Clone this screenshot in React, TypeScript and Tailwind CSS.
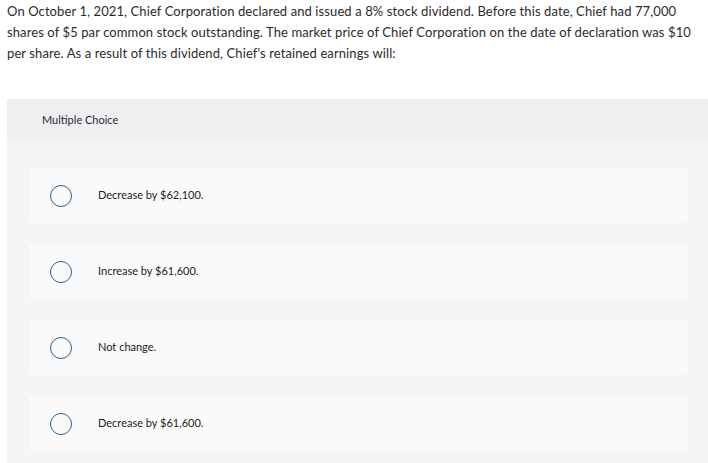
const options = ['Decrease by $62,100.', 'Increase by $61,600.', 'Not change.', 'Decrease by $61,600.'];

export default function App() {
  return (
    <div className="min-h-[463px] bg-white pl-[7px] text-[#2b2b2b] font-['Lato','Liberation_Sans',sans-serif]">
      <p className="w-[690px] pt-[1px] text-[13px] leading-[21px] tracking-[0.1px]">
        On October 1, 2021, Chief Corporation declared and issued a 8% stock dividend. Before this date, Chief had 77,000 shares of $5 par common stock outstanding. The market price of Chief Corporation on the date of declaration was $10 per share. As a result of this dividend, Chief&apos;s retained earnings will:
      </p>
      <div className="mt-[35px] bg-[#f5f5f5] pb-[20px]">
        <div className="flex h-[42px] items-center bg-[#efefef] pl-[35px] text-[11px] text-[#2a2a3a]">Multiple Choice</div>
        <div className="flex flex-col gap-[21px] pt-[27px] pl-[22px] pr-[20px]">
          {options.map((o) => (
            <div key={o} className="flex h-[55px] items-center rounded-[3px] bg-[#fafafa] pl-[21px]">
              <span className="h-[22px] w-[22px] rounded-full border-[1.5px] border-[#2f5f8f]" />
              <span className="ml-[26px] text-[11px] text-[#222]">{o}</span>
            </div>
          ))}
        </div>
      </div>
    </div>
  );
}
